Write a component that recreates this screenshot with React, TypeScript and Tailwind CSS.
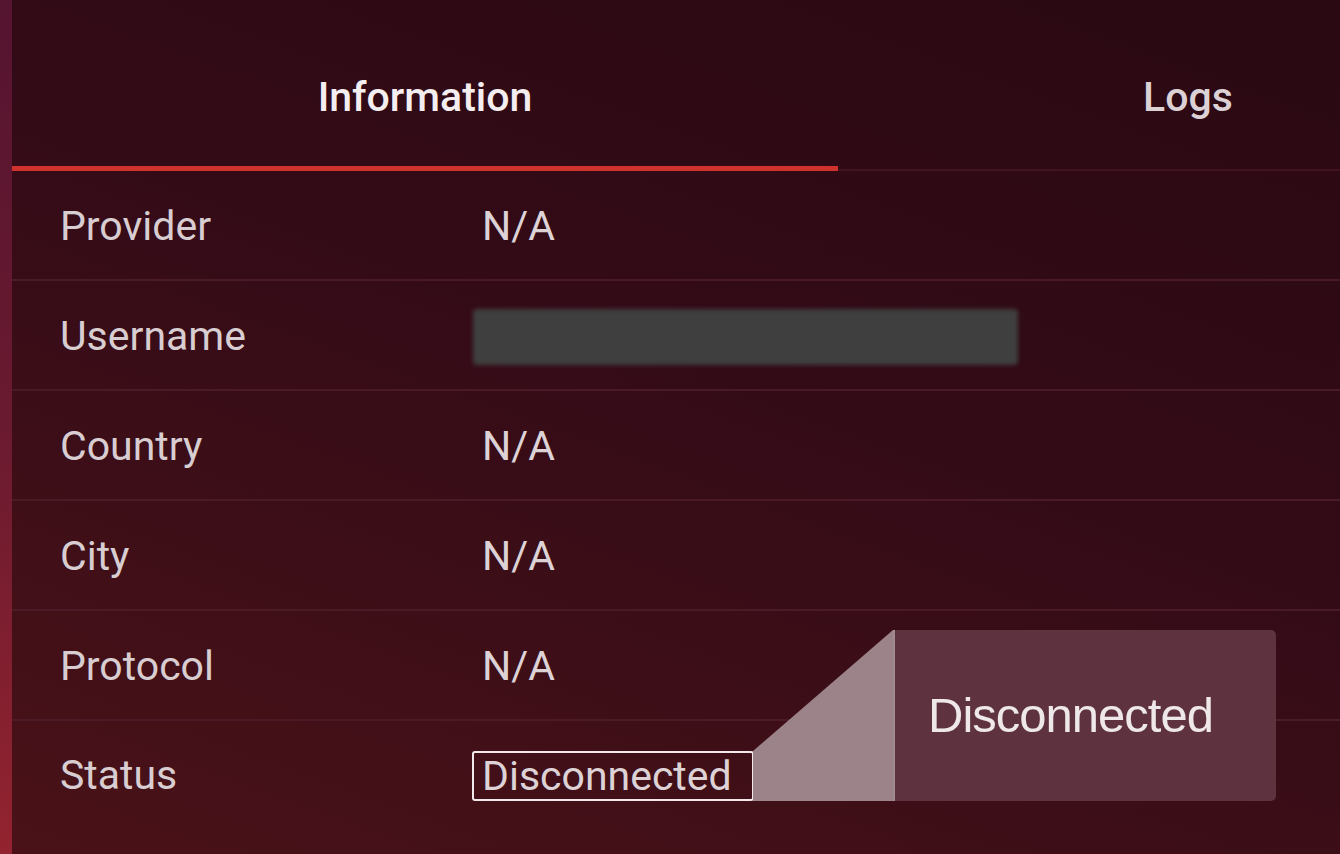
import React from "react";

const rows = [
  { label: "Provider", value: "N/A" },
  { label: "Username", value: "" },
  { label: "Country", value: "N/A" },
  { label: "City", value: "N/A" },
  { label: "Protocol", value: "N/A" },
];

const App = () => {
  return (
    <div
      className="flex h-[854px] w-[1340px] overflow-hidden bg-[linear-gradient(200deg,#2a0912_0%,#330b17_45%,#4a1218_100%)] text-[#e4dadd]"
      style={{ fontFamily: "Roboto, 'Noto Sans', sans-serif" }}
    >
      <div className="w-[12px] shrink-0 bg-[linear-gradient(180deg,#551430_0%,#6a1a30_50%,#93232f_100%)]" />
      <div className="flex flex-1 flex-col">
        {/* tabs */}
        <div className="flex h-[171px] border-b-2 border-[#43141f]">
          <div className="relative flex w-[826px] items-center justify-center pt-[26px]">
            <span className="text-[41px] font-medium text-[#f4eef0]">Information</span>
            <div className="absolute bottom-[-2px] left-0 h-[5px] w-full bg-[#d0322e]" />
          </div>
          <div className="flex flex-1 items-center pl-[305px] pt-[26px]">
            <span className="text-[41px] font-medium text-[#dcd2d6]">Logs</span>
          </div>
        </div>

        {rows.map((r) => (
          <div
            key={r.label}
            className="flex h-[110px] items-center border-b-2 border-[#4a1a26] pt-[4px]"
          >
            <span className="w-[470px] shrink-0 pl-[48px] text-[41px] text-[#d8cdd1]">{r.label}</span>
            {r.value ? (
              <span className="text-[41px] text-[#ddd2d6]">{r.value}</span>
            ) : (
              <div className="ml-[-9px] h-[56px] w-[545px] rounded-[4px] bg-[#3f3f3f] blur-[2px]" />
            )}
          </div>
        ))}

        {/* status row */}
        <div className="relative flex h-[110px] items-center">
          <span className="w-[470px] shrink-0 pl-[48px] text-[41px] text-[#d8cdd1]">Status</span>
          <span className="ml-[-10px] flex h-[50px] w-[282px] items-center rounded-[3px] border-2 border-[#f0e8ea] pl-[8px] text-[41px] leading-none text-[#ddd2d6]">
            Disconnected
          </span>

          {/* tooltip callout */}
          <div className="absolute left-[741px] top-[-91px] flex h-[171px]">
            <svg width="140" height="171" viewBox="0 0 140 171" className="shrink-0">
              <polygon points="0,121 140,0 140,171 0,171" fill="#9b8389" />
            </svg>
            <div className="flex h-[171px] w-[383px] items-center rounded-r-[5px] border-l-2 border-[#a08a90] bg-[#5e333f] pl-[33px]">
              <span
                className="text-[49px] tracking-[-1px] text-[#efe8ea]"
                style={{ fontFamily: "'Liberation Sans', Arial, sans-serif" }}
              >
                Disconnected
              </span>
            </div>
          </div>
        </div>
      </div>
    </div>
  );
};

export default App;
